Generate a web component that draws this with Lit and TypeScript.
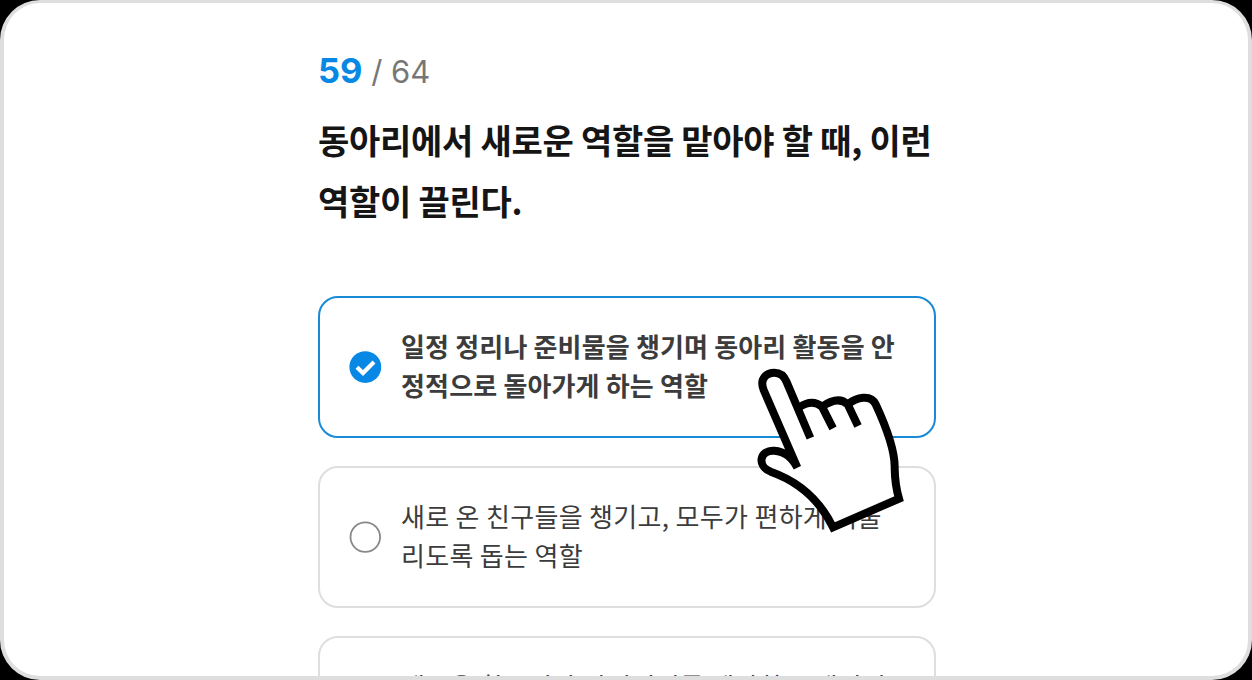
import { css, html, LitElement, svg } from "lit";
import { customElement, property } from "lit/decorators.js";

interface Answer {
  lines: string[];
  checked: boolean;
}

const ANSWERS: Answer[] = [
  {
    lines: ["일정 정리나 준비물을 챙기며 동아리 활동을 안", "정적으로 돌아가게 하는 역할"],
    checked: true,
  },
  {
    lines: ["새로 온 친구들을 챙기고, 모두가 편하게 어울", "리도록 돕는 역할"],
    checked: false,
  },
  {
    lines: ["새로운 활동이나 아이디어를 제안하고 재미있", "게 만드는 역할"],
    checked: false,
  },
];

@customElement("quiz-option")
export class QuizOption extends LitElement {
  @property({ type: Object }) answer!: Answer;

  static styles = css`
    :host {
      display: block;
    }

    .option {
      display: flex;
      align-items: center;
      box-sizing: border-box;
      height: 142px;
      padding: 0 29px;
      gap: 19px;
      border: 2px solid #dedede;
      border-radius: 20px;
      color: #3c3c3c;
      background: #fff;
    }

    .checked {
      border-color: #198ad6;
      font-weight: 600;
    }

    .mark {
      flex: none;
      width: 33px;
      height: 33px;
    }

    .text {
      padding-bottom: 4px;
      font-size: 26px;
      line-height: 39.5px;
      letter-spacing: 0.32px;
      white-space: nowrap;
    }

    .checked .text {
      letter-spacing: 0.16px;
    }
  `;

  render() {
    const { lines, checked } = this.answer;
    return html`
      <div class="option ${checked ? "checked" : ""}">
        <svg class="mark" viewBox="0 0 33 33" fill="none">
          ${checked
            ? svg`
              <circle cx="16.3" cy="16.1" r="15.9" fill="#0788e4" />
              <path d="M8 16.2l6 5.8L25 11" stroke="#fff" stroke-width="4.2" />`
            : svg`<circle cx="16.3" cy="16.1" r="14.8" stroke="#888" stroke-width="1.8" />`}
        </svg>
        <div class="text">${lines.map((line) => html`<div>${line}</div>`)}</div>
      </div>
    `;
  }
}

@customElement("app-root")
export class AppRoot extends LitElement {
  static styles = css`
    :host {
      display: block;
      width: 1252px;
      height: 680px;
      background: #000;
      font-family: "Noto Sans CJK KR", sans-serif;
    }

    .frame {
      position: relative;
      box-sizing: border-box;
      height: 680px;
      overflow: hidden;
      border: 4px solid #dedede;
      border-top-width: 3px;
      border-radius: 40px;
      background: #fff;
    }

    .quiz {
      width: 618px;
      margin-left: 314px;
      padding-top: 45px;
    }

    .progress {
      display: flex;
      align-items: baseline;
      height: 45px;
      line-height: 45px;
      font-family: Inter, sans-serif;
      font-size: 31px;
      color: #777;
      white-space: pre;
    }

    .current {
      font-size: 34.5px;
      font-weight: 700;
      color: #0788e4;
    }

    .question {
      height: 122px;
      margin: 16px 0 0;
      font-size: 34px;
      font-weight: 600;
      line-height: 61px;
      letter-spacing: -0.28px;
      color: #151515;
      white-space: nowrap;
    }

    .options {
      display: grid;
      gap: 28px;
      margin-top: 65px;
    }

    .hand {
      position: absolute;
      left: 736px;
      top: 352px;
      width: 200px;
      height: 190px;
    }
  `;

  render() {
    return html`
      <div class="frame">
        <div class="quiz">
          <div class="progress"><span class="current">59</span> / 64</div>
          <h1 class="question">동아리에서 새로운 역할을 맡아야 할 때, 이런<br />역할이 끌린다.</h1>
          <div class="options">
            ${ANSWERS.map((answer) => html`<quiz-option .answer=${answer}></quiz-option>`)}
          </div>
        </div>
        <svg class="hand" viewBox="0 0 600 570" fill="none" stroke="#000" stroke-width="24">
          <path
            fill="#fff"
            stroke="none"
            d="M164 320L71 105C57 69 82 53 103 53Q128 53 139 79L176 158Q212 132 250 155Q291 122 328 148Q391 109 407 148Q470 285 464 340Q465 390 477 431L279 517Q220 395 92 350C50 333 58 285 103 287Q139 286 164 320Z"
          />
          <path
            d="M172 338L71 105C57 69 82 53 103 53Q128 53 139 79L211 249M176 158Q216 130 246 155L279 220M246 155Q295 121 323 148L354 213M323 148C350 127 392 117 407 148Q466 275 464 340Q465 390 477 431L279 517Q220 395 92 350C50 333 58 285 103 287Q148 290 172 338"
          />
        </svg>
      </div>
    `;
  }
}
